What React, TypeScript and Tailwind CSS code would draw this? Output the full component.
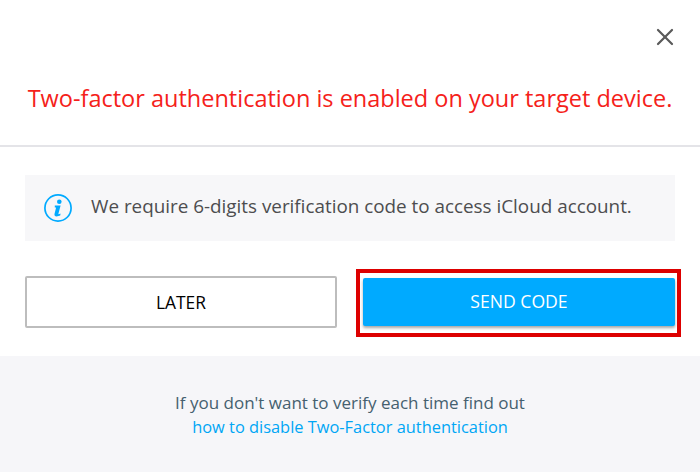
import { X } from "lucide-react";

function InfoIcon() {
  return (
    <svg width="28" height="28" viewBox="0 0 28 28" fill="none" className="shrink-0">
      <circle cx="14" cy="14" r="13.1" stroke="#00aaff" strokeWidth="1.7" />
      <circle cx="15.3" cy="7.8" r="2.3" fill="#00aaff" />
      <path
        d="M10.8 11.6h5.8l-2.2 8.1c-.1.6.5.6 2-.2v1.7c-1.1.7-2.6 1.2-3.9 1.2-1.5 0-2.3-.9-2-2.3l1.6-6.6h-1.3z"
        fill="#00aaff"
      />
    </svg>
  );
}

export default function App() {
  return (
    <div className="flex h-[472px] w-[700px] flex-col overflow-hidden bg-white font-['Open_Sans',sans-serif]">
      <header className="flex h-[147px] shrink-0 flex-col border-b-2 border-[#e4e4e8]">
        <div className="flex justify-end pr-[21px] pt-[23px]">
          <X size={28} strokeWidth={1.9} className="text-[#5a5a5a]" />
        </div>
        <h1 className="mt-[31px] text-center text-[23.5px] leading-[32px] font-normal whitespace-nowrap text-[#f5211a]">
          Two-factor authentication is enabled on your target device.
        </h1>
      </header>

      <main className="h-[209px] shrink-0 px-[25px] pt-[28px]">
        <div className="flex h-[66px] items-center gap-[19px] bg-[#f7f7f9] pl-[19px]">
          <InfoIcon />
          <p className="pb-[4px] text-[18.85px] whitespace-nowrap text-[#4d4d4f]">
            We require 6-digits verification code to access iCloud account.
          </p>
        </div>

        <div className="mt-[35px] flex items-center justify-between">
          <button className="h-[52px] w-[312px] rounded-[2px] border-2 border-[#bdbdbd] bg-white text-[17.4px] text-black">
            LATER
          </button>
          <div className="-mt-[7px] -mr-[6px] -mb-[9px] border-4 border-[#dd0000] pt-[5px] pr-[2px] pb-[7px] pl-[3px]">
            <button className="block h-[48px] w-[312px] rounded-[2px] bg-[#00aaff] pb-[2px] text-[17.6px] text-white shadow-[0_2px_3px_rgba(0,0,0,0.35)]">
              SEND CODE
            </button>
          </div>
        </div>
      </main>

      <footer className="flex flex-1 flex-col items-center bg-[#f6f6f9] pt-[35px] leading-[24px]">
        <p className="text-[17px] text-[#45606f]">If you don't want to verify each time find out</p>
        <a className="text-[16.4px] text-[#00a6f5]">how to disable Two-Factor authentication</a>
      </footer>
    </div>
  );
}
